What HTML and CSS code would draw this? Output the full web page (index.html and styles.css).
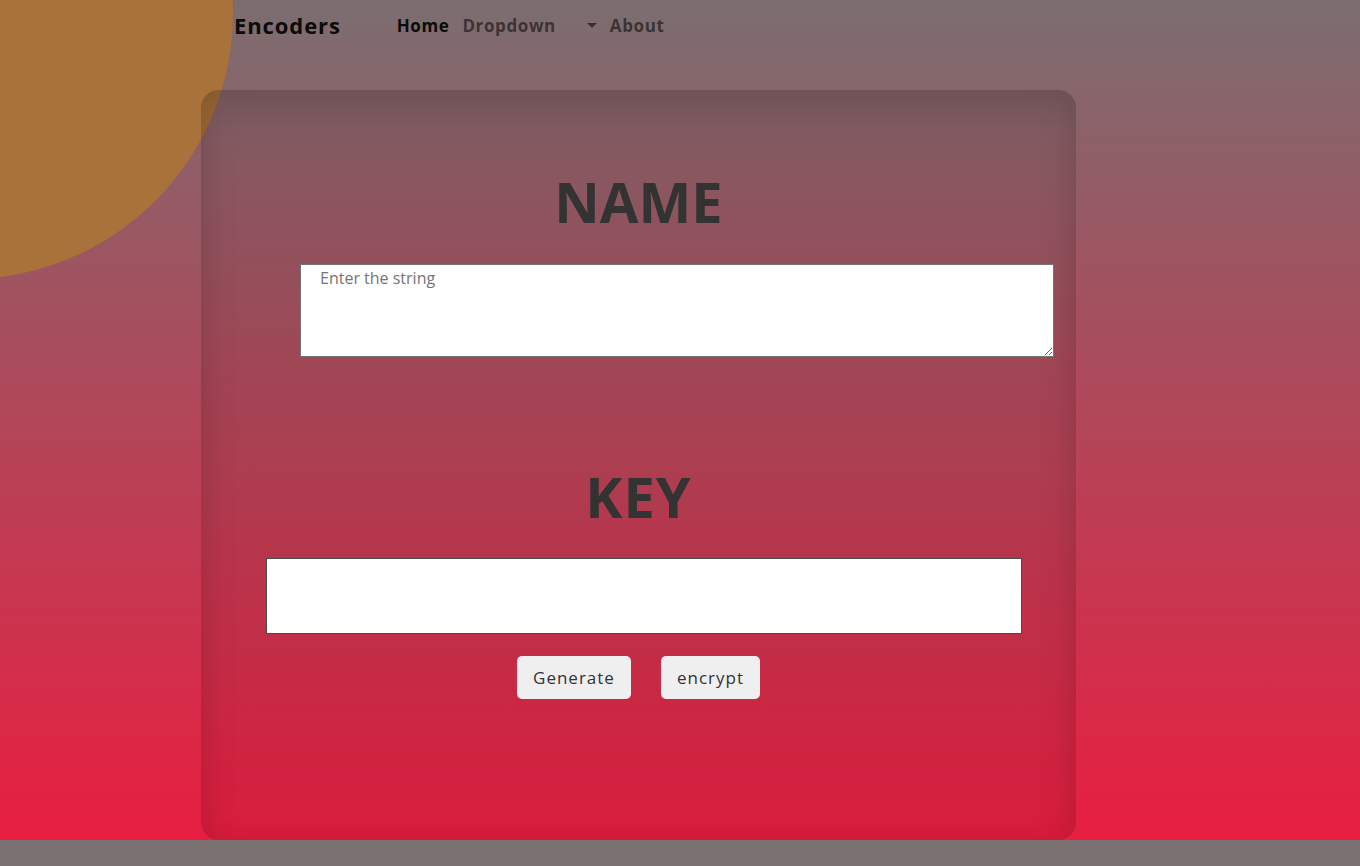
FILE: index.html
```html
<!DOCTYPE html>
<html lang="en">
<head>
	<meta charset="UTF-8">
	<title>Encoders</title>
	<link rel="stylesheet" href="styles.css">
</head>
<body>
	<div class="blob"></div>
	<nav class="navbar">
		<a href="javascript:;" class="brand">Encoders</a>
		<ul class="nav-links">
			<li><a href="javascript:;" class="active">Home</a></li>
			<li class="dropdown"><a href="javascript:;">Dropdown</a><span class="caret"></span></li>
			<li><a href="javascript:;">About</a></li>
		</ul>
	</nav>

	<div class="card">
		<h1 class="title">NAME</h1>
		<textarea class="name-box" placeholder="Enter the string"></textarea>
		<h1 class="title key-title">KEY</h1>
		<input type="text" class="key-box">
		<div class="actions">
			<button class="btn btn-generate">Generate</button>
			<button class="btn btn-encrypt">encrypt</button>
		</div>
	</div>
</body>
</html>
```

FILE: styles.css
```css
*{
	margin: 0;
	padding: 0;
	box-sizing: border-box;
}
html{
	background-color: #797070;
}
body{
	position: relative;
	height: 840px;
	font-family: "Open Sans", "Noto Sans", sans-serif;
	background: linear-gradient(to bottom, #7b6e70 0%, #e91e41 100%);
	overflow: hidden;
}
.blob{
	position: absolute;
	left: -299px;
	top: -253px;
	width: 532px;
	height: 532px;
	border-radius: 50%;
	background-color: #a8723a;
	z-index: 0;
}
.navbar{
	position: relative;
	z-index: 1;
	height: 50px;
	display: flex;
	align-items: center;
	padding-left: 234px;
}
.navbar a{
	text-decoration: none;
}
.brand{
	font-size: 22px;
	font-weight: 700;
	letter-spacing: 0.9px;
	color: #0b0b0b;
	margin-right: 56px;
}
.nav-links{
	list-style: none;
	display: flex;
	align-items: center;
}
.nav-links a{
	font-size: 17px;
	font-weight: 700;
	letter-spacing: 0.6px;
	color: rgba(0,0,0,0.55);
}
.nav-links a.active{
	color: #0b0b0b;
}
.nav-links li{
	margin-right: 13px;
}
.dropdown{
	display: flex;
	align-items: center;
}
.caret{
	display: inline-block;
	margin-left: 31px;
	width: 0;
	height: 0;
	border-top: 5px solid rgba(0,0,0,0.55);
	border-left: 5px solid transparent;
	border-right: 5px solid transparent;
}
.card{
	position: relative;
	z-index: 1;
	width: 875px;
	height: 750px;
	margin: 40px 0 0 201px;
	padding-top: 83px;
	border-radius: 18px;
	background-color: rgba(0,0,0,0.06);
	box-shadow: inset 0 22px 40px rgba(0,0,0,0.12), inset 0 0 24px rgba(0,0,0,0.06);
}
.title{
	font-size: 56px;
	font-weight: 700;
	line-height: 1;
	text-align: center;
	color: #333;
}
.key-title{
	margin-top: 111px;
	letter-spacing: 1px;
}
.name-box{
	display: block;
	width: 754px;
	height: 93px;
	margin: 35px 0 0 99px;
	padding: 2px 19px;
	border: 1px solid #767676;
	font-family: "Open Sans", sans-serif;
	font-size: 16px;
	background-color: #fff;
}
.name-box::placeholder{
	color: #757575;
}
.key-box{
	display: block;
	width: 756px;
	height: 76px;
	margin: 34px 0 0 65px;
	border: 1px solid #444c4c;
	background-color: #fff;
}
.actions{
	display: flex;
	justify-content: center;
	gap: 30px;
	margin-top: 22px;
}
.btn{
	height: 43px;
	padding: 0 16px;
	border: none;
	border-radius: 5px;
	background-color: #efefef;
	color: #333;
	font-family: "Open Sans", sans-serif;
	font-size: 17px;
	letter-spacing: 1px;
}
```
